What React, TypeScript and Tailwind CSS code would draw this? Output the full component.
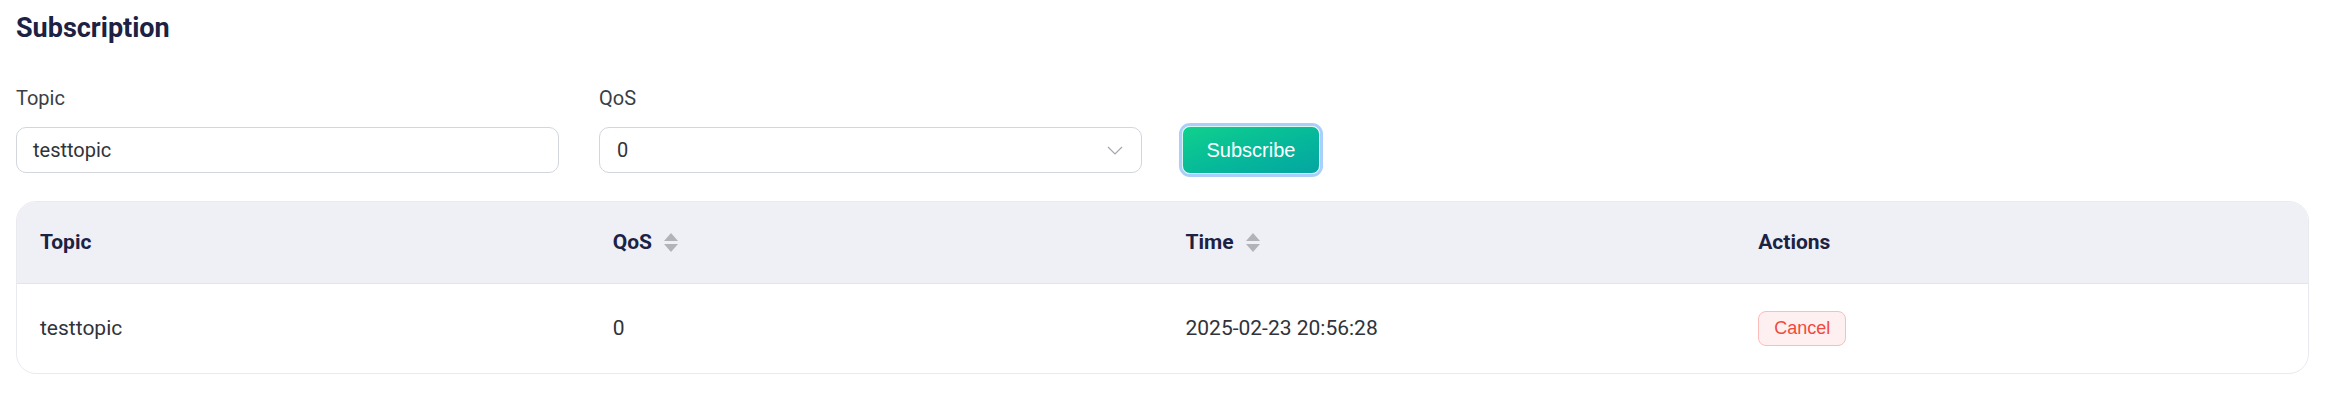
import React from 'react';

const rows = [{ topic: 'testtopic', qos: 0, time: '2025-02-23 20:56:28' }];

function SortIcon() {
  return (
    <svg width="14" height="19" viewBox="0 0 14 19" className="ml-3 shrink-0">
      <polygon points="7,0 14,8 0,8" fill="#b1b3b9" />
      <polygon points="0,11 14,11 7,19" fill="#b1b3b9" />
    </svg>
  );
}

function Chevron() {
  return (
    <svg width="16" height="9" viewBox="0 0 16 9" fill="none">
      <polyline points="1,1 8,8 15,1" stroke="#a3a6ad" strokeWidth="1.2" />
    </svg>
  );
}

export default function App() {
  return (
    <div className="w-full h-[400px] bg-white pl-4 pr-[23px] font-['Roboto',sans-serif] text-[#33363d]">
      <h2 className="pt-[13px] text-[27px] leading-[30px] font-bold text-[#1b2244]">
        Subscription
      </h2>

      <div className="mt-[43px] flex items-end gap-10">
        <div className="w-[543px]">
          <label className="block text-[20px] leading-[24px] mb-[17px] text-[#3a3d45]">Topic</label>
          <div className="h-[46px] flex items-center px-4 border border-[#d3d6dd] rounded-[10px] text-[20px] text-[#30333a]">
            testtopic
          </div>
        </div>
        <div className="w-[543px]">
          <label className="block text-[20px] leading-[24px] mb-[17px] text-[#3a3d45]">QoS</label>
          <div className="h-[46px] flex items-center justify-between pl-[17px] pr-[18px] border border-[#d3d6dd] rounded-[10px] text-[20px] text-[#30333a]">
            <span>0</span>
            <Chevron />
          </div>
        </div>
        <div className="h-[46px] flex items-center">
          <button className="w-[138px] h-[48px] rounded-[8px] border border-[#d9f7ee] bg-gradient-to-br from-[#11d08c] to-[#05a5a2] shadow-[0_0_0_3px_#a9cffa] text-white text-[20px] font-['Liberation_Sans',sans-serif]">
            Subscribe
          </button>
        </div>
      </div>

      <div className="mt-[28px] border border-[#e9eaf0] rounded-[20px] overflow-hidden">
        <div className="grid grid-cols-4 h-[82px] bg-[#eff0f5] border-b border-[#e3e5eb] text-[21px] font-bold text-[#1b2244]">
          <div className="flex items-center pl-[23px]">Topic</div>
          <div className="flex items-center pl-[23px]">
            QoS
            <SortIcon />
          </div>
          <div className="flex items-center pl-[23px]">
            Time
            <SortIcon />
          </div>
          <div className="flex items-center pl-[23px]">Actions</div>
        </div>
        {rows.map((r) => (
          <div key={r.topic} className="grid grid-cols-4 h-[89px] text-[21px] text-[#30333a]">
            <div className="flex items-center pl-[23px]">{r.topic}</div>
            <div className="flex items-center pl-[23px]">{r.qos}</div>
            <div className="flex items-center pl-[23px]">{r.time}</div>
            <div className="flex items-center pl-[23px]">
              <button className="h-[35px] px-[15px] rounded-[8px] border border-[#fbbcbc] bg-[#fef0f0] text-[#f3493c] text-[18px] font-['Liberation_Sans',sans-serif]">
                Cancel
              </button>
            </div>
          </div>
        ))}
      </div>
    </div>
  );
}
